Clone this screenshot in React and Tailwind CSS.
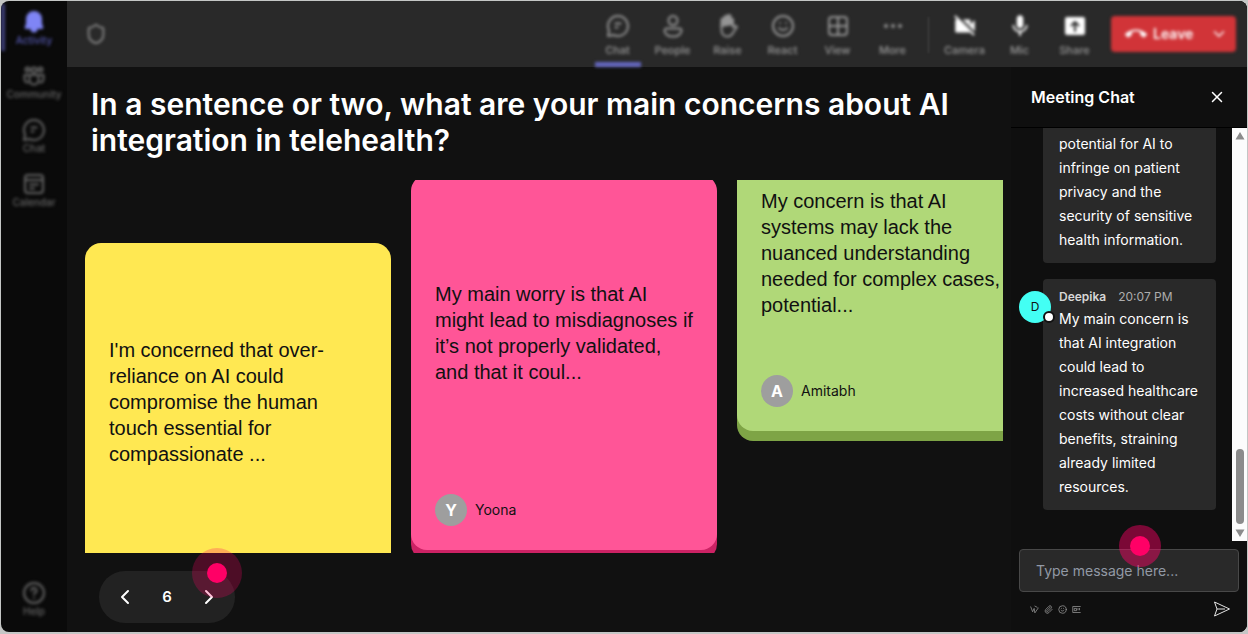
import { MdCallEnd, MdMic, MdVideocamOff } from 'react-icons/md'
import { ChevronDown, ChevronLeft, ChevronRight, MoreHorizontal, Paperclip, Shield, Smile, X } from 'lucide-react'

function Svg({ children, size = 24 }) {
  return (
    <svg
      width={size}
      height={size}
      viewBox="0 0 24 24"
      fill="none"
      stroke="currentColor"
      strokeWidth="2"
      strokeLinecap="round"
      strokeLinejoin="round"
      aria-hidden="true"
    >
      {children}
    </svg>
  )
}

const BellIcon = () => (
  <Svg>
    <path
      fill="currentColor"
      stroke="none"
      d="M12 1a8 8 0 0 0-8 8v4.500L2.800 17c-.4 1 .2 2 1.200 2h4.500a3.500 3.500 0 0 0 7 0H20c1 0 1.600-1 1.200-2L20 13.500V9a8 8 0 0 0-8-8z"
    />
  </Svg>
)

const CommunityIcon = () => (
  <Svg>
    <circle cx="12" cy="6" r="2.500" />
    <circle cx="5.500" cy="5.500" r="2" />
    <circle cx="18.500" cy="5.500" r="2" />
    <path d="M7.500 11h9v5a4.500 4.500 0 0 1-9 0z" />
    <path d="M6 11H2.500v4A3.500 3.500 0 0 0 6 18.500M18 11h3.500v4a3.500 3.500 0 0 1-3.500 3.500" />
  </Svg>
)

const ChatIcon = () => (
  <Svg>
    <path d="M12 2a10 10 0 1 1-4.600 18.900L2 22l1.100-5.400A10 10 0 0 1 12 2z" />
    <path d="M9.500 9.500h5M9.500 13.500h2" />
  </Svg>
)

const CalendarIcon = () => (
  <Svg>
    <rect x="3" y="3" width="18" height="18" rx="3" />
    <path d="M3 8h18M8 12.500h8M8 16.500h4" />
  </Svg>
)

const HelpIcon = () => (
  <Svg>
    <circle cx="12" cy="12" r="10" />
    <path d="M9.500 9.500a2.500 2.500 0 1 1 3.500 2.300c-.7.300-1 .8-1 1.700M12 17h.01" />
  </Svg>
)

const PersonIcon = () => (
  <Svg>
    <circle cx="12" cy="6.500" r="4.500" />
    <path d="M5.500 14.500h13a2 2 0 0 1 2 2c0 3.500-3.500 6-8.500 6s-8.500-2.500-8.500-6a2 2 0 0 1 2-2z" />
  </Svg>
)

const HandIcon = () => (
  <Svg>
    <path
      d="M5.500 12V6a1.500 1.500 0 0 1 3 0V3.500a1.500 1.500 0 0 1 3 0V2.500a1.500 1.500 0 0 1 3 0V5a1.500 1.500 0 0 1 2.500 1v4z"
      fill="currentColor"
    />
    <path d="M5.500 11v5c0 4 2.500 6.500 6 6.500 3 0 4.500-1.500 6-4.500l3.500-5c-1.500-1.800-3-.8-4 .5V6" />
  </Svg>
)

const GridIcon = () => (
  <Svg>
    <rect x="3" y="3" width="18" height="18" rx="3" />
    <path d="M12 3v18M3 12h18" />
  </Svg>
)

const ShareIcon = () => (
  <Svg>
    <rect x="2" y="3" width="20" height="18" rx="2" fill="currentColor" stroke="none" />
    <path d="M12 17V8.500M8.500 11.500 12 8l3.500 3.500" stroke="#292929" />
  </Svg>
)

const SendIcon = () => (
  <svg width="18" height="18" viewBox="0 0 18 18" fill="none" stroke="currentColor" strokeLinejoin="round" aria-hidden="true">
    <path d="M1.500 2 16.500 9 1.500 16 4 9z M4 9h8" />
  </svg>
)

const sideItems = [
  { label: 'Activity', icon: <BellIcon />, active: true },
  { label: 'Community', icon: <CommunityIcon /> },
  { label: 'Chat', icon: <ChatIcon /> },
  { label: 'Calendar', icon: <CalendarIcon /> },
]

const tools = [
  { label: 'Chat', icon: <ChatIcon />, active: true },
  { label: 'People', icon: <PersonIcon /> },
  { label: 'Raise', icon: <HandIcon /> },
  { label: 'React', icon: <Smile /> },
  { label: 'View', icon: <GridIcon /> },
  { label: 'More', icon: <MoreHorizontal /> },
]

const deviceTools = [
  { label: 'Camera', icon: <MdVideocamOff size={26} /> },
  { label: 'Mic', icon: <MdMic size={26} /> },
  { label: 'Share', icon: <ShareIcon /> },
]

const notes = [
  {
    text: "I'm concerned that over-reliance on AI could compromise the human touch essential for compassionate ...",
    card: 'mt-[63px] bg-[#ffe852] shadow-[0_10px_0_#ccb422]',
    body: 'pt-[70px]',
  },
  {
    text: 'My main worry is that AI might lead to misdiagnoses if it’s not properly validated, and that it coul...',
    name: 'Yoona',
    card: '-mt-[5px] bg-[#ff5597] shadow-[0_10px_0_#cc2264]',
    body: 'pt-[82px]',
  },
  {
    text: 'My concern is that AI systems may lack the nuanced understanding needed for complex cases, potential...',
    name: 'Amitabh',
    card: '-mt-[124px] bg-[#b0d878] shadow-[0_10px_0_#7ea446]',
    body: 'pt-[108px]',
  },
]

function SideItem({ label, icon, active }) {
  return (
    <button
      type="button"
      className={
        'flex h-[47px] w-full flex-col items-center justify-center border-l-4 pr-1 blur-[1px] ' +
        (active ? 'border-[#3d3e78] text-[#7f85f5]' : 'border-transparent text-[#666]')
      }
    >
      {icon}
      <span className={'text-[10px] font-medium leading-3 ' + (active ? 'text-[#5558b0]' : '')}>{label}</span>
    </button>
  )
}

function Tool({ label, icon, active, bright }) {
  return (
    <button
      type="button"
      className={
        'flex h-full w-[55px] flex-col items-center pt-3 blur-[1px] ' + (bright ? 'text-white' : 'text-[#959595]')
      }
    >
      <span className="flex h-[26px] items-center">{icon}</span>
      <span className="mt-[3px] text-[11px] font-medium leading-4 text-[#999]">{label}</span>
      {active && <span className="mt-1 h-[5px] w-[46px] bg-[#6467c0]" />}
    </button>
  )
}

function Note({ text, name, card, body }) {
  return (
    <article className={'flex h-[375px] w-[306px] shrink-0 flex-col rounded-2xl p-6 text-[#111] ' + card}>
      <p className={'flex-1 font-["Liberation_Sans",Arial,sans-serif] text-xl leading-[26px] ' + body}>
        {text}
      </p>
      {name && (
        <div className="flex items-center gap-2">
          <span className="flex size-8 items-center justify-center rounded-full bg-[#9e9e9e] text-base font-bold text-white">
            {name[0]}
          </span>
          <span className="text-sm">{name}</span>
        </div>
      )}
    </article>
  )
}

function ChatPanel() {
  return (
    <aside className="flex w-[236px] shrink-0 flex-col bg-[#0f0f0f]">
      <div className="flex h-[61px] shrink-0 items-center justify-between border-b border-black pl-5 pr-[21px]">
        <h2 className="text-base font-semibold text-white">Meeting Chat</h2>
        <button type="button" aria-label="Close chat" className="text-white">
          <X size={18} />
        </button>
      </div>

      <div className="flex min-h-0 flex-1">
        <div className="flex min-w-0 flex-1 flex-col justify-end gap-4 overflow-hidden pb-[31px] pl-2 pr-4 text-sm leading-6 text-white">
          <div className="ml-6 flex min-h-0 flex-1 items-end rounded-b bg-[#292929] px-4 pb-[11px]">
            <p>potential for AI to infringe on patient privacy and the security of sensitive health information.</p>
          </div>
          <div className="relative ml-6 rounded bg-[#292929] px-4 pb-[11px] pt-2">
            <span className="absolute -left-6 top-3 flex size-8 items-center justify-center rounded-full bg-[#43fff4] text-xs text-[#111]">
              D
              <span className="absolute -right-1 bottom-0 size-3 rounded-full border-2 border-[#111] bg-white" />
            </span>
            <p className="flex gap-3 text-xs leading-5">
              <b className="font-semibold text-[#d6d6d6]">Deepika</b>
              <time className="text-[#adadad]">20:07 PM</time>
            </p>
            <p>
              My main concern is that AI integration could lead to increased healthcare costs without clear
              benefits, straining already limited resources.
            </p>
          </div>
        </div>
        <div className="flex w-[15px] flex-col items-center bg-[#fcfcfc] py-1 text-[#8b8b8b]">
          <svg width="10" height="8" viewBox="0 0 10 8" fill="currentColor" aria-hidden="true">
            <path d="M5 0 9.500 7.500H.5z" />
          </svg>
          <span className="mb-[5px] mt-auto h-[75px] w-2 rounded-full bg-[#8b8b8b]" />
          <svg width="10" height="8" viewBox="0 0 10 8" fill="currentColor" aria-hidden="true">
            <path d="M5 8 .5 .5h9z" />
          </svg>
        </div>
      </div>

      <form className="shrink-0 px-2 pb-[14px] pt-2">
        <div className="relative">
          <input
            type="text"
            aria-label="Message"
            placeholder="Type message here..."
            className="block h-[43px] w-full rounded border border-[#484848] bg-[#292929] px-4 text-sm text-white placeholder:text-[#9299a5]"
          />
          <Hotspot className="-top-6 left-[100px] size-[42px] bg-[#ff0066]/45" />
        </div>
        <div className="mt-2 flex items-center gap-[5px] pl-[11px] pr-2 text-[#9a9a9a]">
          <button type="button" aria-label="Format">
            <Svg size={9}>
              <path d="M2 5l5 13 4-9 2 12L22 8M13 3l6 3" />
            </Svg>
          </button>
          <button type="button" aria-label="Attach">
            <Paperclip size={9} />
          </button>
          <button type="button" aria-label="Emoji">
            <Smile size={9} />
          </button>
          <button type="button" aria-label="GIF">
            <Svg size={9}>
              <path d="M22 4H2v16h20M7 9h5v6H7zM16 9v4M20 13V9" />
            </Svg>
          </button>
          <button type="submit" aria-label="Send" className="ml-auto text-[#e5e5e5]">
            <SendIcon />
          </button>
        </div>
      </form>
    </aside>
  )
}

function Hotspot({ className }) {
  return (
    <span className={'pointer-events-none absolute flex items-center justify-center rounded-full ' + className}>
      <span className="size-5 rounded-full bg-[#ff0066]" />
    </span>
  )
}

export default function App() {
  return (
    <div className='h-screen bg-[#c4c6c5] px-px pb-[2px] pt-px font-["Inter",sans-serif]'>
      <div className="flex h-full overflow-hidden rounded-lg bg-[#0a0a0a]">
        <nav className="flex w-[66px] shrink-0 flex-col gap-[7px] pb-[10px] pt-[3px] blur-[1px]">
          {sideItems.map((item) => (
            <SideItem key={item.label} {...item} />
          ))}
          <div className="mt-auto">
            <SideItem label="Help" icon={<HelpIcon />} />
          </div>
        </nav>

        <div className="flex min-w-0 flex-1 flex-col bg-[#111]">
          <header className="flex h-[66px] shrink-0 bg-[#292929]">
            <div className="flex min-w-0 flex-1 pl-[18px] pr-[11px] blur-[1px]">
              <Shield size={22} className="mt-[22px] text-[#8a8a8a] blur-[1px]" />
              <div className="ml-auto flex">
                {tools.map((tool) => (
                  <Tool key={tool.label} {...tool} />
                ))}
                <span className="mx-2 mt-4 h-9 w-px bg-[#4a4a4a]" />
                {deviceTools.map((tool) => (
                  <Tool key={tool.label} bright {...tool} />
                ))}
              </div>
              <button
                type="button"
                className="ml-[9px] mt-[15px] flex h-9 w-[125px] items-center rounded bg-[#d13438] pl-[14px] pr-2 text-sm font-semibold text-white blur-[1px]"
              >
                <MdCallEnd size={22} />
                <span className="ml-[6px]">Leave</span>
                <ChevronDown size={18} strokeWidth={2} className="ml-auto" />
              </button>
            </div>
          </header>

          <div className="flex min-h-0 flex-1">
            <main className="flex min-w-0 flex-1 flex-col pb-[9px] pl-[18px] pr-2">
              <h1 className="pl-[6px] pt-[19px] text-3xl font-semibold text-white">
                In a sentence or two, what are your main concerns about AI integration in telehealth?
              </h1>
              <section className="mt-[22px] flex min-h-0 flex-1 items-start gap-5 overflow-hidden">
                {notes.map((note) => (
                  <Note key={note.text} {...note} />
                ))}
              </section>
              <div className="relative ml-[14px] mt-[18px] flex h-[52px] w-[136px] shrink-0 items-center justify-between self-start rounded-full bg-[#222] px-[14px] text-white">
                <button type="button" aria-label="Previous page">
                  <ChevronLeft size={24} />
                </button>
                <span className="text-[15px] font-semibold">6</span>
                <button type="button" aria-label="Next page">
                  <ChevronRight size={24} />
                </button>
                <Hotspot className="-top-[23px] left-[93px] size-[50px] bg-[#ff0066]/25" />
              </div>
            </main>
            <ChatPanel />
          </div>
        </div>
      </div>
    </div>
  )
}
